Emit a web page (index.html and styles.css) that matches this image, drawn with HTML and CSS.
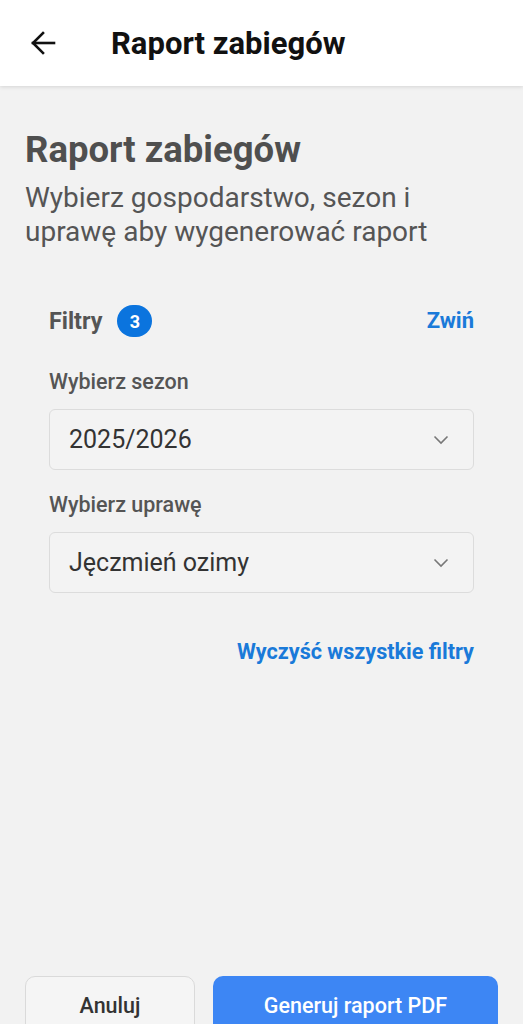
FILE: index.html
```html
<!doctype html>
<html lang="pl">
  <head>
    <meta charset="UTF-8" />
    <meta name="viewport" content="width=device-width, initial-scale=1.0" />
    <title>Raport zabiegów</title>
    <link rel="stylesheet" href="styles.css">
  </head>
  <body>
    <div id="topbar">
      <button class="back-btn" aria-label="Wstecz">
        <svg width="26" height="26" viewBox="0 0 26 26" fill="none" stroke="#111" stroke-width="2.6" stroke-linecap="square">
          <path d="M24 13H3" />
          <path d="M13 3L3 13l10 10" />
        </svg>
      </button>
      <div class="topbar-title">Raport zabiegów</div>
    </div>

    <div id="main-content">
      <h1>Raport zabiegów</h1>
      <p class="subtitle">Wybierz gospodarstwo, sezon i uprawę aby wygenerować raport</p>

      <div class="filters">
        <div class="filters-head">
          <span class="filters-title">Filtry</span>
          <span class="badge">3</span>
          <a class="link collapse-link">Zwiń</a>
        </div>

        <div class="field">
          <label>Wybierz sezon</label>
          <div class="select">
            <span>2025/2026</span>
            <svg width="16" height="10" viewBox="0 0 16 10" fill="none" stroke="#777" stroke-width="1.6">
              <path d="M1.5 1.5L8 8l6.5-6.5" />
            </svg>
          </div>
        </div>

        <div class="field">
          <label>Wybierz uprawę</label>
          <div class="select">
            <span>Jęczmień ozimy</span>
            <svg width="16" height="10" viewBox="0 0 16 10" fill="none" stroke="#777" stroke-width="1.6">
              <path d="M1.5 1.5L8 8l6.5-6.5" />
            </svg>
          </div>
        </div>

        <div class="clear-row">
          <a class="link">Wyczyść wszystkie filtry</a>
        </div>
      </div>
    </div>

    <div id="footer">
      <button class="btn btn-secondary">Anuluj</button>
      <button class="btn btn-primary">Generuj raport PDF</button>
    </div>
  </body>
</html>
```

FILE: styles.css
```css
body {
  font-family: Roboto, 'Noto Sans', Arial, sans-serif;
  display: flex;
  flex-direction: column;
  margin: 0;
  height: 100vh;
  overflow: hidden;
  background-color: #f2f2f2;
  color: #555;
}
#topbar {
  height: 86px;
  flex-shrink: 0;
  display: flex;
  align-items: center;
  padding-left: 30px;
  background-color: #fff;
  box-shadow: 0 1px 4px rgba(0, 0, 0, 0.12);
  z-index: 10;
}
.back-btn {
  border: none;
  background: none;
  padding: 0;
  width: 26px;
  height: 26px;
  cursor: pointer;
}
.topbar-title {
  margin-left: 55px;
  font-size: 31px;
  font-weight: 700;
  color: #111;
}
#main-content {
  flex: 1 0 auto;
  padding: 42px 25px 0;
}
h1 {
  margin: 0;
  font-size: 36.5px;
  font-weight: 700;
  line-height: 44px;
  color: #4f4f4f;
}
.subtitle {
  margin: 9px 0 0;
  font-size: 28px;
  line-height: 34px;
  color: #555;
}
.filters {
  padding: 55px 24px 0;
}
.filters-head {
  display: flex;
  align-items: center;
  height: 34px;
}
.filters-title {
  font-size: 23.3px;
  font-weight: 700;
  color: #555;
}
.badge {
  margin-left: 15px;
  width: 35px;
  height: 32px;
  border-radius: 16px;
  background-color: #0b74de;
  color: #fff;
  font-size: 18px;
  font-weight: 700;
  display: flex;
  align-items: center;
  justify-content: center;
}
.link {
  font-size: 21.6px;
  line-height: 26px;
  font-weight: 700;
  color: #1a7ad9;
  cursor: pointer;
}
.collapse-link {
  margin-left: auto;
  font-size: 22px;
}
.field {
  margin-top: 31px;
}
.field + .field {
  margin-top: 22px;
}
.field label {
  display: block;
  font-size: 21.5px;
  line-height: 26px;
  font-weight: 500;
  color: #555;
  margin-bottom: 14px;
}
.select {
  height: 59px;
  border: 1px solid #dcdcdc;
  border-radius: 6px;
  background-color: #f3f3f3;
  display: flex;
  align-items: center;
  justify-content: space-between;
  padding: 0 24px 0 19px;
  font-size: 25px;
  color: #333;
}
.clear-row {
  display: flex;
  justify-content: flex-end;
  margin-top: 46px;
}
#footer {
  flex-shrink: 0;
  display: flex;
  gap: 18px;
  padding: 0 25px;
  margin-bottom: -10px;
}
.btn {
  height: 58px;
  border-radius: 10px;
  font-family: inherit;
  font-size: 21.5px;
  font-weight: 500;
  cursor: pointer;
}
.btn-secondary {
  width: 170px;
  border: 1px solid #dadada;
  background-color: #f5f5f5;
  color: #333;
}
.btn-primary {
  flex: 1;
  border: none;
  background-color: #3d86f4;
  color: #fff;
}
```
